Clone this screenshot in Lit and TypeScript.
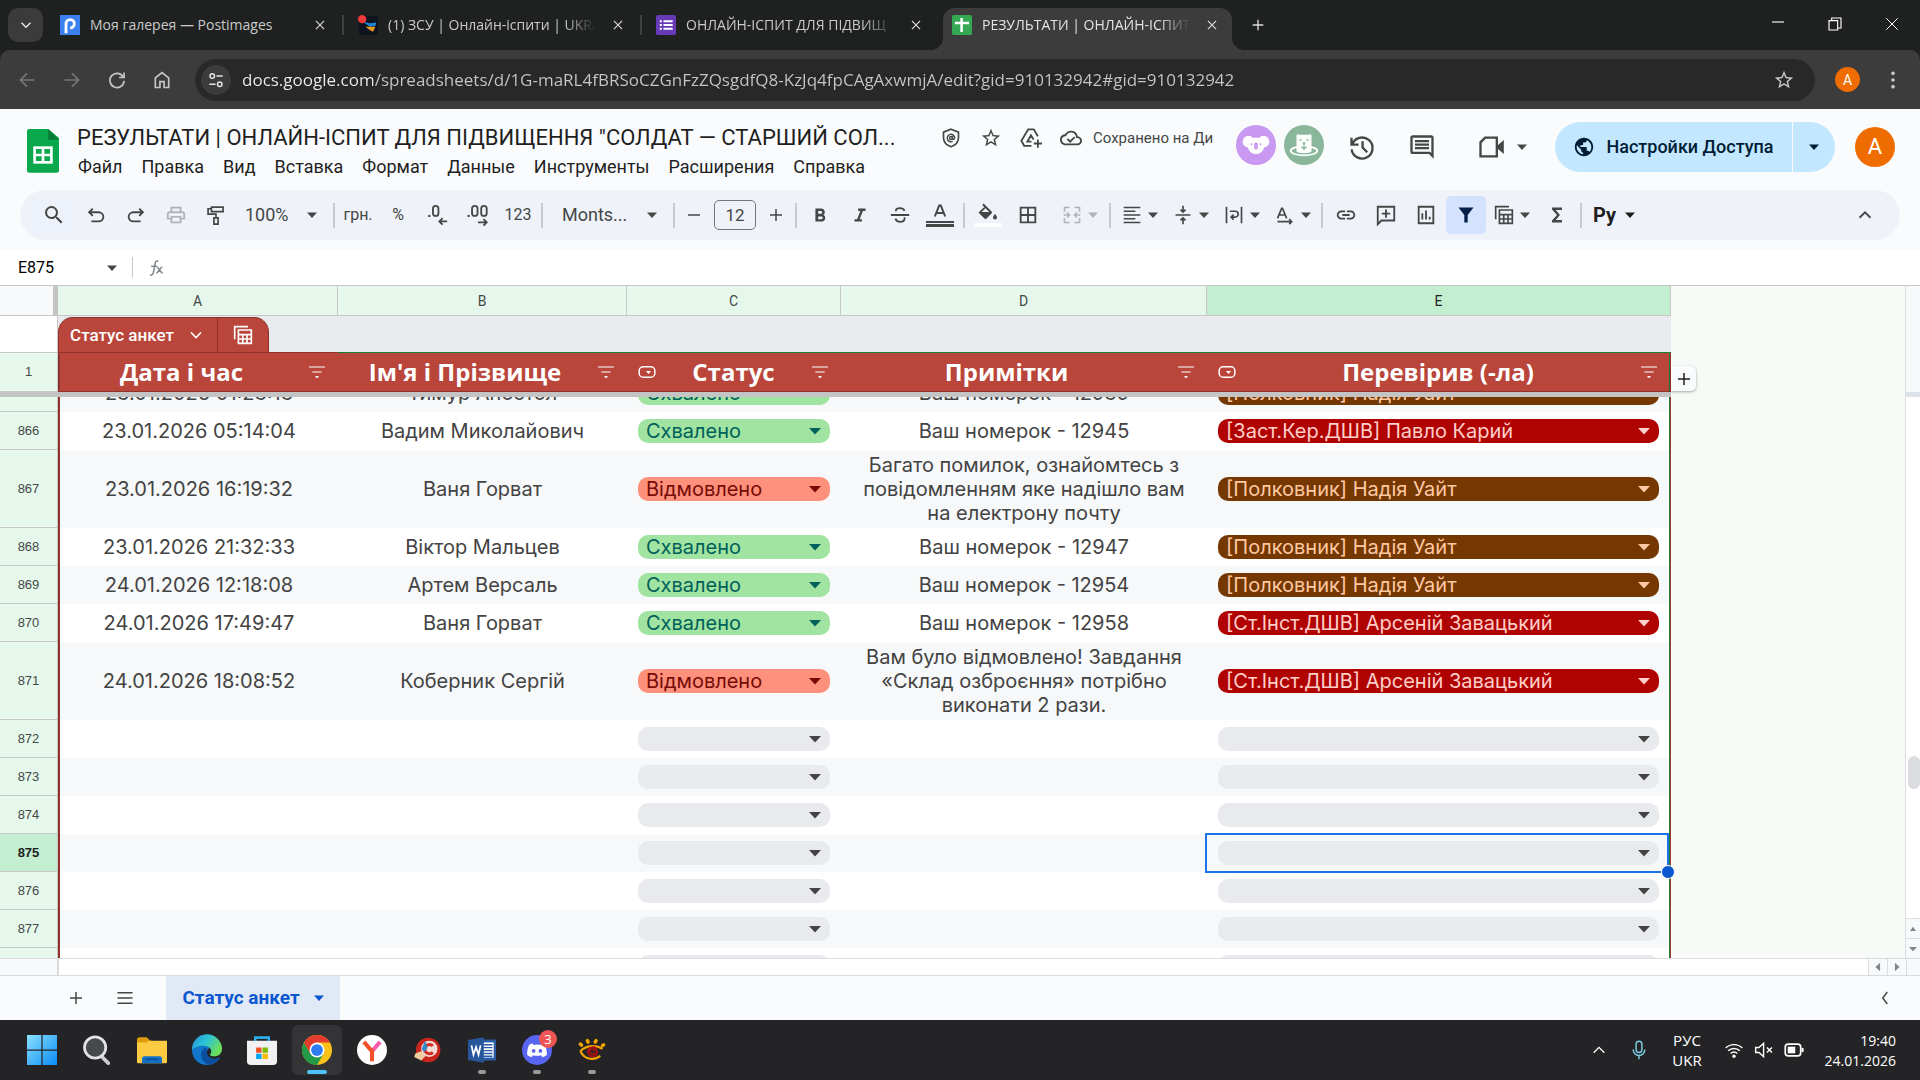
import { LitElement, html, css, svg, nothing, type TemplateResult } from "lit";
import { customElement } from "lit/decorators.js";
import { classMap } from "lit/directives/class-map.js";

/* ---------- icons (24-unit grid unless noted) ---------- */

const ICONS: Record<string, TemplateResult> = {
  chevronDown: svg`<path class="s" d="M6 9l6 6 6-6"/>`,
  chevronUp: svg`<path class="s" d="M6 15l6-6 6 6"/>`,
  chevronLeft: svg`<path class="s" d="M15 4l-6 8 6 8"/>`,
  caret: svg`<path d="M0 6h24L12 19z"/>`,
  caretUp: svg`<path d="M3 18h18L12 5z"/>`,
  caretLeft: svg`<path d="M17 2v20L6 12z"/>`,
  caretRight: svg`<path d="M7 2v20l11-10z"/>`,
  close: svg`<path class="s" d="M5 5l14 14M19 5L5 19"/>`,
  plus: svg`<path class="s" d="M12 4v16M4 12h16"/>`,
  minus: svg`<path class="s" d="M4 12h16"/>`,
  winMin: svg`<path class="t" d="M3 9h18"/>`,
  winMax: svg`<path class="t" d="M3 7h13v14H3zM7 7V3h14v15h-5"/>`,
  winClose: svg`<path class="t" d="M2 2l20 20M22 2L2 22"/>`,
  back: svg`<path class="s" d="M21 12H4M12 4l-8 8 8 8"/>`,
  forward: svg`<path class="s" d="M3 12h17M12 4l8 8-8 8"/>`,
  reload: svg`<path class="s" d="M19.5 8.5A8.5 8.5 0 1 0 20.500 13M20.500 3v6h-6"/>`,
  home: svg`<path class="s" d="M4 21V9.500L12 3l8 6.500V21h-5.500v-7h-5v7z"/>`,
  tune: svg`<path class="s" d="M12.500 6.500H21M3 17.500h8.500"/><circle class="s" cx="7" cy="6.500" r="3"/><circle class="s" cx="17" cy="17.500" r="3"/>`,
  star: svg`<path d="M22 9.240l-7.190-.62L12 2 9.190 8.630 2 9.240l5.460 4.730L5.820 21 12 17.270 18.180 21l-1.630-7.030L22 9.240zM12 15.400l-3.760 2.270 1-4.280-3.320-2.880 4.380-.38L12 6.100l1.710 4.040 4.380.38-3.320 2.880 1 4.280L12 15.400z"/>`,
  dots: svg`<circle cx="12" cy="4" r="2.200"/><circle cx="12" cy="12" r="2.200"/><circle cx="12" cy="20" r="2.200"/>`,
  shield: svg`<path class="s" d="M12 1.500l9 3.500v6.500c0 5.500-4 9.300-9 11-5-1.700-9-5.500-9-11V5z"/><circle class="t" cx="12" cy="12" r="1.800"/><path class="t" d="M13.800 10v2.400c0 1.700 2.700 1.700 2.700-.6A4.500 4.500 0 1 0 14 16.100"/>`,
  drive: svg`<path class="s" d="M12.500 20.500H4.500l-3-5.500L9 2.500h6l4.500 7.500M12.500 16H8L12 9l2.800 4.800M19.500 13.500v9M15 18h9"/>`,
  cloud: svg`<path d="M19.350 10.040A7.490 7.490 0 0 0 12 4C9.110 4 6.600 5.640 5.350 8.040A5.994 5.994 0 0 0 0 14c0 3.310 2.690 6 6 6h13c2.760 0 5-2.240 5-5 0-2.640-2.050-4.780-4.650-4.960zM19 18H6c-2.210 0-4-1.790-4-4s1.790-4 4-4h.71C7.370 7.690 9.480 6 12 6c3.040 0 5.500 2.460 5.500 5.500v.5H19c1.660 0 3 1.340 3 3s-1.340 3-3 3z"/><path class="s" d="M8 13l3 3 5-5"/>`,
  history: svg`<path class="s" d="M3.500 10a9 9 0 1 1-.4 4M3 4v6h6M12.500 7v5.500l4 4"/>`,
  comment: svg`<path d="M21.990 4c0-1.100-.89-2-1.990-2H4c-1.100 0-2 .9-2 2v12c0 1.100.9 2 2 2h14l4 4-.01-18zM20 4v13.170L18.830 16H4V4h16zM6 12h12v2H6zm0-3h12v2H6zm0-3h12v2H6z"/>`,
  meet: svg`<path class="s" d="M7 4h10v16H3V8zM3 8l4-4"/><path d="M16.500 11.500L23 6v12l-6.500-5.500z"/>`,
  globe: svg`<path d="M12 2C6.480 2 2 6.480 2 12s4.480 10 10 10 10-4.480 10-10S17.520 2 12 2zm-1 17.930c-3.950-.49-7-3.850-7-7.930 0-.62.08-1.210.21-1.790L9 15v1c0 1.100.9 2 2 2v1.930zm6.900-2.540c-.26-.81-1-1.390-1.900-1.390h-1v-3c0-.55-.45-1-1-1H8v-2h2c.55 0 1-.45 1-1V7h2c1.100 0 2-.9 2-2v-.41c2.930 1.190 5 4.060 5 7.410 0 2.080-.8 3.970-2.100 5.390z"/>`,
  search: svg`<path d="M15.500 14h-.79l-.28-.27A6.471 6.471 0 0 0 16 9.500 6.500 6.500 0 1 0 9.500 16c1.610 0 3.090-.59 4.230-1.570l.27.28v.79l5 4.990L20.490 19l-4.990-5zm-6 0C7.010 14 5 11.990 5 9.500S7.010 5 9.500 5 14 7.010 14 9.500 11.990 14 9.500 14z"/>`,
  undo: svg`<path class="s" d="M8.500 5L4.500 9l4 4M4.500 9H15a5 5 0 0 1 0 10H7"/>`,
  redo: svg`<path class="s" d="M15.500 5l4 4-4 4M19.500 9H9a5 5 0 0 0 0 10h8"/>`,
  print: svg`<path d="M19 8h-1V3H6v5H5c-1.660 0-3 1.340-3 3v6h4v4h12v-4h4v-6c0-1.660-1.340-3-3-3zM8 5h8v3H8V5zm8 12v2H8v-4h8v2zm2-2v-2H6v2H4v-4c0-.55.45-1 1-1h14c.55 0 1 .45 1 1v4h-2z"/>`,
  roller: svg`<path class="s" d="M6.500 2.500h14V8h-14zM6.500 4.500H2.500V11H12v4M9.500 15.500h5V23h-5z"/>`,
  decLess: svg`<path class="s" d="M22 19h-8M17 15.500L13.500 19l3.500 3.500"/><rect class="s" x="6.500" y="2" width="6" height="11" rx="3"/><circle cx="2.500" cy="13" r="1.300"/>`,
  decMore: svg`<path class="s" d="M12 20h9M18 16.500l3.500 3.500-3.500 3.500"/><rect class="s" x="5.500" y="2" width="6" height="11" rx="3"/><rect class="s" x="15.500" y="2" width="6" height="11" rx="3"/><circle cx="1.800" cy="13" r="1.300"/>`,
  bold: svg`<path d="M15.600 11.790c.97-.67 1.650-1.770 1.650-2.790 0-2.260-1.750-4-4-4H7v14h7.040c2.090 0 3.710-1.700 3.710-3.790 0-1.520-.86-2.820-2.150-3.420zM10 7.500h3c.83 0 1.500.67 1.500 1.500s-.67 1.500-1.500 1.500h-3v-3zm3.500 9H10v-3h3.500c.83 0 1.500.67 1.500 1.500s-.67 1.500-1.500 1.500z"/>`,
  italic: svg`<path d="M10 5v2.500h2.400l-3.600 9H6V19h8v-2.500h-2.400l3.600-9H18V5z"/>`,
  strike: svg`<path class="s" d="M2 12h20M17 7.500C16 5.500 14.300 4.500 12 4.500c-2.800 0-4.600 1.400-4.600 3.500M7 16c.7 2 2.500 3.500 5 3.500 3 0 5-1.500 5-3.600 0-.5-.1-1-.3-1.400"/>`,
  textColor: svg`<path class="s" d="M6.800 13.500L11.200 2.500h1.600l4.400 11M8.500 10h7"/><path d="M-2 18h28v2H-2zM-2 21h28v3H-2z"/>`,
  fill: svg`<path d="M15.560 8.440L7.620.5 6.210 1.910l2.080 2.080-4.850 4.450c-.59.59-.59 1.540 0 2.120l5 5c.29.29.68.44 1.060.44s.77-.15 1.060-.44l5-5c.59-.58.59-1.530 0-2.120zM5.500 9l4-3.800L13.300 9zM19 11s-2 2.170-2 3.500c0 1.100.9 2 2 2s2-.9 2-2c0-1.330-2-3.500-2-3.500z"/><path d="M-2 20h28v4H-2z" fill="#fff"/>`,
  borders: svg`<path d="M3 3v18h18V3H3zm8 16H5v-6h6v6zm0-8H5V5h6v6zm8 8h-6v-6h6v6zm0-8h-6V5h6v6z"/>`,
  merge: svg`<path class="s" d="M9 3H3v5M15 3h6v5M3 16v5h6M21 16v5h-6M2 12h7M6 9l3 3-3 3M22 12h-7M18 9l-3 3 3 3"/>`,
  alignLeft: svg`<path class="s" d="M2 3h20M2 7.500h14M2 12h20M2 16.500h14M2 21h20"/>`,
  vAlign: svg`<path class="s" d="M3 12h18M12 1v7M9 5.500l3 3 3-3M12 23v-7M9 18.500l3-3 3 3"/>`,
  wrap: svg`<path class="s" d="M3 2v20M21 2v20M7 7.500h6.500a3.500 3.500 0 0 1 0 7H9M11.500 11.500l-3 3 3 3"/>`,
  rotate: svg`<path class="s" d="M3 16L8 4h1l5 12M5 12h7M3 20h17M17 17l3 3-3 3"/>`,
  link: svg`<path d="M3.900 12c0-1.710 1.390-3.100 3.100-3.100h4V7H7c-2.760 0-5 2.240-5 5s2.240 5 5 5h4v-1.900H7c-1.710 0-3.100-1.390-3.100-3.100zM8 13h8v-2H8v2zm9-6h-4v1.900h4c1.710 0 3.100 1.390 3.100 3.100s-1.390 3.100-3.100 3.100h-4V17h4c2.760 0 5-2.240 5-5s-2.240-5-5-5z"/>`,
  addComment: svg`<path class="s" d="M3 3h18v15H7l-4 4zM12 6v9M7.500 10.500h9"/>`,
  chart: svg`<path class="s" d="M4 3h16v18H4zM8 17v-7M12 17V7M16 17v-3"/>`,
  funnel: svg`<path d="M3 3h18l-7 9v9h-4v-9z"/>`,
  tableView: svg`<path class="s" d="M2 17V2h16M6.500 6H22v16H6.500zM6.500 11.500H22M6.500 16.800H22M11.700 11.500V22M16.800 11.500V22"/>`,
  sigma: svg`<path d="M18 3H6v2.500l6 6.500-6 6.500V21h12v-3H10.500l5-6-5-6H18z"/>`,
  menu: svg`<path class="s" d="M2 5h20M2 12h20M2 19h20"/>`,
  filterLines: svg`<path class="t" d="M0 4.500h24M5 12h14"/><path d="M9.800 18h4.400v2.500H9.800z"/>`,
  chipMark: svg`<rect class="s" x="1.500" y="5" width="21" height="14" rx="5.500"/><path d="M10.500 10.500h7L14 14.500z"/>`,
  fx: svg`<path class="s" d="M4 21c3 1 4-1 4.500-3L11 5.500C11.500 3 13 2 15 3M5.500 9.500h8M13 11c3-1 4 8 8 7.500M20.500 10.500c-3 0-4.500 8-8 8"/>`,
  chevronTray: svg`<path class="s" d="M4 16l8-8 8 8"/>`,
  mic: svg`<rect class="t" x="8.500" y="1.500" width="7" height="13.500" rx="3.500"/><path class="t" d="M5 11.500a7 7 0 0 0 14 0M12 18.500V23"/>`,
  wifi: svg`<path class="t" d="M2 9.500a14.500 14.500 0 0 1 20 0M5 13a10.200 10.200 0 0 1 14 0M8 16.200a6 6 0 0 1 8 0"/><circle cx="12" cy="19.500" r="2"/>`,
  muted: svg`<path class="t" d="M2 9h4l5.500-5v16L6 15H2zM15.500 9l6 6M21.500 9l-6 6"/>`,
  battery: svg`<rect class="s" x="1.500" y="5" width="18.500" height="14" rx="3.500"/><rect x="4.500" y="8" width="9" height="8"/><path d="M21 9.500h2.500v5H21z"/>`,
};

const PICTURES: Record<string, TemplateResult> = {
  postimages: svg`<rect width="24" height="24" fill="#3c7fee"/><path d="M7.200 22V10.500a5 5 0 1 1 5 5" fill="none" stroke="#fff" stroke-width="3.400"/>`,
  game: svg`<rect x="1" y="1" width="23" height="23" rx="4" fill="#0d1420"/><path d="M6 8l8 2 8-1-1 4-7 1z" fill="#1d86d8"/><path d="M9 14l12 0-3 6-4-2z" fill="#e49a1c"/><circle cx="5" cy="5" r="5" fill="#f03a3a"/>`,
  forms: svg`<rect width="24" height="24" rx="2" fill="#673ab7"/><path d="M9 7.500h11M9 12h11M9 16.500h11" stroke="#fff" stroke-width="2.400"/><path d="M4.500 7.500H7M4.500 12H7M4.500 16.500H7" stroke="#fff" stroke-width="2.400"/>`,
  sheetsFav: svg`<rect width="24" height="24" rx="2" fill="#34a853"/><path d="M3.500 9.500h17M11.500 3.500v17" stroke="#fff" stroke-width="3"/>`,
  windows: svg`<defs><linearGradient id="w" gradientUnits="userSpaceOnUse" x2="24" y2="24"><stop stop-color="#8be0ff"/><stop offset="1" stop-color="#0a8df5"/></linearGradient></defs><path d="M0 0h11.500v11.500H0zM12.500 0H24v11.500H12.500zM0 12.500h11.500V24H0zM12.500 12.500H24V24H12.500z" fill="url(#w)"/>`,
  find: svg`<path d="M15.500 17l5.500 5.500" stroke="#c9ccd1" stroke-width="3" stroke-linecap="round"/><circle cx="10.500" cy="10" r="8.500" fill="#48494b" stroke="#dfe2e6" stroke-width="2.200"/>`,
  folder: svg`<path d="M0 4q0-2 2-2h6l2.500 2.500H12V10H0z" fill="#dd9a0c"/><path d="M0 6V4.500h24v17q0 1-1 1H1q-1 0-1-1z" fill="#fdcb42"/><path d="M0 4q0-2 2-2h6l1.500 2.500L8 6H0z" fill="#dd9a0c"/><path d="M4 22.500V19q0-2 2-2h12q2 0 2 2v3.500z" fill="#1370c4"/><path d="M7 19.500h10" stroke="#0a4a91" stroke-width="1.200"/>`,
  edge: svg`<defs><linearGradient id="e" x2="1" y2=".5"><stop stop-color="#2492dc"/><stop offset=".5" stop-color="#2bc3d6"/><stop offset="1" stop-color="#6be05a"/></linearGradient></defs><path d="M0 12C0 19 5.400 24 12 24c4.500 0 8.300-2.300 10.500-6-4.500 2.300-9.500 1-10.500-3-.6-2.500.5-4 2-4.500C12 6 1 6 0 12z" fill="#1276cc"/><path d="M0 12A12 12 0 0 1 24 11c0 4-3 6-6 6-3.500 0-4-1-3-2.500C16.500 12 14 8.500 9.500 8.500 5 8.500 1 10 0 12z" fill="url(#e)"/><path d="M11 10c-5 1-5.500 12 3 13.800 3.500-.6 6.500-2.700 8.500-5.800-4.500 2.300-9.500 1-10.500-3-.5-2 .3-3.500-1-5z" fill="#0b4f9e"/>`,
  store: svg`<path d="M6.500 7V2h11v5" fill="none" stroke="#28b0ef" stroke-width="1.800"/><path d="M0 4.500h24V21q0 3-3 3H3q-3 0-3-3z" fill="#f1f1f2"/><path d="M6.500 4.500V2h11v2.500" fill="none" stroke="#28b0ef" stroke-width="1.800"/><path d="M7.300 10h4.300v4.200H7.300z" fill="#f25022"/><path d="M12.400 10h4.300v4.200h-4.300z" fill="#7fba00"/><path d="M7.300 15h4.300v4.200H7.300z" fill="#00a4ef"/><path d="M12.400 15h4.300v4.200h-4.300z" fill="#ffb900"/>`,
  chrome: svg`<circle cx="12" cy="12" r="12" fill="#fbc116"/><path d="M1.600 6A12 12 0 0 0 12 24l5.200-9H6.800z" fill="#229a48"/><path d="M12 6h10.400A12 12 0 0 0 1.600 6l5.200 9z" fill="#e33b2e"/><circle cx="12" cy="12" r="6" fill="#fff"/><circle cx="12" cy="12" r="4.700" fill="#2f7cf0"/>`,
  yandex: svg`<circle cx="12" cy="12" r="12" fill="#fff"/><path d="M18.500 5.500L12 13" stroke="#f45cab" stroke-width="3.300"/><path d="M5.500 5.500l6.500 7.500v8" fill="none" stroke="#f0502a" stroke-width="3.300"/>`,
  cleaner: svg`<circle cx="13" cy="12" r="10.500" fill="#c9251d"/><circle cx="14" cy="11" r="7" fill="#f2dcd8"/><path d="M17 8.500a4 4 0 1 0 0 5.500" fill="none" stroke="#d22b22" stroke-width="2.600"/><path d="M10.500 4l2 6-3 4-2-3z" fill="#2d87c9"/><path d="M2 15l5-2 4 4-4 4-6-3z" fill="#f3cda2"/>`,
  word: svg`<path d="M12 3h11q1 0 1 1v16q0 1-1 1H12z" fill="#2b5ca5"/><path d="M13 5.500h9v13h-9z" fill="#fff"/><path d="M13 7.500h8M13 10h8M13 12.500h8M13 15h8M13 17.300h8" stroke="#2b5ca5" stroke-width="1.200"/><path d="M0 3.500L13.500 1v22L0 20.500z" fill="#28569a"/><path d="M3 8l1.700 8L6.900 9.500 9 16l1.800-8" fill="none" stroke="#fff" stroke-width="1.500"/>`,
  discord: svg`<circle cx="12" cy="12" r="12" fill="#5865f2"/><path d="M8.500 6.800c-1.300.2-2 .6-2.800 1C4.500 10.500 4 13 4.100 16c1.400 1 2.600 1.500 3.600 1.700l1-1.500c2.200.6 4.400.6 6.600 0l1 1.500c1-.2 2.200-.7 3.600-1.700.1-3-.4-5.500-1.600-8.200-.8-.4-1.500-.8-2.800-1l-.7 1.200a12 12 0 0 0-5.600 0z" fill="#fff"/><circle cx="9.300" cy="12.700" r="1.500" fill="#5865f2"/><circle cx="14.700" cy="12.700" r="1.500" fill="#5865f2"/>`,
  eye: svg`<path d="M2 13c5-5.500 14-5.500 19-2M2 13c4 8 13 8 17 4" fill="none" stroke="#f6a500" stroke-width="1.900"/><path d="M16.500 13.500a4 4 0 1 1-4-4 3 3 0 1 1-2.500 3.500 2 2 0 0 1 4 0" fill="none" stroke="#a51212" stroke-width="1.600"/><path d="M2 7l1 .8M8 4l.7 1.200M15.500 4l-.7 1.200M22 7.500l-1 .8" stroke="#f6a500" stroke-width="3" stroke-linecap="round"/>`,
  koala: svg`<circle cx="12" cy="12" r="12" fill="#c998f0"/><circle cx="7.500" cy="10" r="3.500" fill="#fff"/><circle cx="16.500" cy="10" r="3.500" fill="#fff"/><ellipse cx="12" cy="12.500" rx="5" ry="5" fill="#fff"/><rect x="10.900" y="10.500" width="2.200" height="4.200" rx="1.100" fill="#c998f0"/><circle cx="9.300" cy="11.500" r=".6" fill="#c998f0"/><circle cx="14.700" cy="11.500" r=".6" fill="#c998f0"/>`,
  bear: svg`<circle cx="12" cy="12" r="12" fill="#8ab79b"/><ellipse cx="12" cy="15.500" rx="8" ry="2.700" fill="none" stroke="#fff" stroke-width="1"/><path d="M7.500 16V6.500q0-1.500 1.800-.7h5.400q1.800-.8 1.800.7V16q-4.500 2-9 0z" fill="#fff"/><path d="M9.300 9h1.200M13.500 9h1.200" stroke="#8ab79b" stroke-width=".8"/><path d="M10.800 10.300h2.400L12 11.800z" fill="#8ab79b"/><path d="M12 11v3.500M10.500 13l1.500 1.500 1.500-1.500" stroke="#8ab79b" stroke-width=".8" fill="none"/>`,
  sheetsLogo: svg`<path d="M2 0h14l8 8v29q0 2-2 2H2q-2 0-2-2V2q0-2 2-2z" transform="scale(1 .84)" fill="#0aa84c"/><path d="M16 0l8 8h-8z" fill="#077a37"/><path d="M4.700 13h14.600v13H4.700z" fill="#fff"/><path d="M6.700 15h4.300v3.500H6.700zM13 15h4.300v3.500H13zM6.700 20.500h4.300V24H6.700zM13 20.500h4.300V24H13z" fill="#0aa84c"/>`,
};

const icon = (name: string, cls = "i22") =>
  html`<svg class="icon ${cls}" viewBox="0 0 24 24" aria-hidden="true">${ICONS[name]}</svg>`;

const picture = (name: string, cls = "i20", box = "0 0 24 24") =>
  html`<svg class="picture ${cls}" viewBox=${box} aria-hidden="true">${PICTURES[name]}</svg>`;

/* ---------- data ---------- */

interface Row {
  n: number;
  date?: string;
  name?: string;
  status?: "ok" | "no";
  note?: string;
  checker?: "brown" | "red" | "red2";
}

const ok = (n: number, date: string, name: string, num: number, checker: Row["checker"]): Row => ({
  n, date, name, status: "ok", note: `Ваш номерок - ${num}`, checker,
});

const ROWS: Row[] = [
  ok(865, "23.01.2026 01:23:13", "Тимур Апостол", 12939, "brown"),
  ok(866, "23.01.2026 05:14:04", "Вадим Миколайович", 12945, "red2"),
  { n: 867, date: "23.01.2026 16:19:32", name: "Ваня Горват", status: "no", note: "Багато помилок, ознайомтесь з\nповідомленням яке надішло вам\nна електрону почту", checker: "brown" },
  ok(868, "23.01.2026 21:32:33", "Віктор Мальцев", 12947, "brown"),
  ok(869, "24.01.2026 12:18:08", "Артем Версаль", 12954, "brown"),
  ok(870, "24.01.2026 17:49:47", "Ваня Горват", 12958, "red"),
  { n: 871, date: "24.01.2026 18:08:52", name: "Коберник Сергій", status: "no", note: "Вам було відмовлено! Завдання\n«Склад озброєння» потрібно\nвиконати 2 рази.", checker: "red" },
  { n: 872 }, { n: 873 }, { n: 874 }, { n: 875 }, { n: 876 }, { n: 877 }, { n: 878 },
];

const STATUS = { ok: "Схвалено", no: "Відмовлено" };
const CHECKER = {
  brown: "[Полковник] Надія Уайт",
  red: "[Ст.Інст.ДШВ] Арсеній Завацький",
  red2: "[Заст.Кер.ДШВ] Павло Карий",
};

const COLUMNS = [
  { letter: "A", title: "Дата і час" },
  { letter: "B", title: "Ім'я і Прізвище" },
  { letter: "C", title: "Статус", chip: true },
  { letter: "D", title: "Примітки" },
  { letter: "E", title: "Перевірив (-ла)", chip: true },
];

const MENUS = ["Файл", "Правка", "Вид", "Вставка", "Формат", "Данные", "Инструменты", "Расширения", "Справка"];

const SELECTED_ROW = 875;

@customElement("app-root")
export class AppRoot extends LitElement {
  static styles = css`
    :host {
      display: flex;
      flex-direction: column;
      height: 100vh;
      overflow: hidden;
      background: #f9fbfd;
      color: #444746;
      font: 16px/20px Roboto, "Liberation Sans", sans-serif;
    }
    * { box-sizing: border-box; }
    button, input, select {
      font: inherit;
      color: inherit;
      background: none;
      border: 0;
      padding: 0;
      margin: 0;
      outline: 0;
      appearance: none;
    }
    button { display: flex; align-items: center; justify-content: center; }
    a { color: inherit; text-decoration: none; }
    svg { display: block; flex: none; overflow: visible; }
    .icon { fill: currentColor; }
    .icon .s { fill: none; stroke: currentColor; stroke-width: 2; }
    .icon .t { fill: none; stroke: currentColor; stroke-width: 1.7; }
    .i8 { width: 8px; height: 8px; }
    .i10 { width: 10px; height: 10px; }
    .i12 { width: 12px; height: 12px; }
    .i14 { width: 14px; height: 14px; }
    .i16 { width: 16px; height: 16px; }
    .i18 { width: 18px; height: 18px; }
    .i20 { width: 20px; height: 20px; }
    .i22 { width: 22px; height: 22px; }
    .i24 { width: 24px; height: 24px; }
    .i28 { width: 28px; height: 28px; }
    .i30 { width: 30px; height: 30px; }
    .i40 { width: 40px; height: 40px; }

    /* browser frame */
    .tabs {
      display: flex;
      height: 50px;
      flex: none;
      background: #1f2120;
      color: #c9cac9;
      font: 14px/20px "Open Sans", sans-serif;
    }
    .tab-search {
      width: 35px;
      height: 34px;
      margin: 8px 3px 0 8px;
      border-radius: 10px;
      background: #3b3b3b;
      color: #e3e3e3;
    }
    .tab {
      display: flex;
      align-items: center;
      flex: 0 1 298px;
      min-width: 0;
      padding: 0 12px 0 14px;
      gap: 10px;
      position: relative;
    }
    .tab.ruled { border-right: 2px solid #3f4140; padding-right: 10px; }
    .tab-slot { display: flex; flex: 0 1 298px; min-width: 0; padding: 15px 0; }
    .tab-slot .tab { flex: 1; }
    .tab-title { flex: 1; min-width: 0; white-space: nowrap; }
    .fade .tab-title { mask-image: linear-gradient(90deg, #000 85%, transparent); }
    .tab-close { flex: none; width: 24px; height: 20px; color: #dcdcdc; }
    .tab.active {
      flex-basis: 289px;
      margin: 8px 0 0 3px;
      padding: 0 8px 8px 9px;
      border-radius: 12px 12px 0 0;
      background: #3c3c3c;
      color: #e3e3e3;
    }
    .tab.active::before, .tab.active::after {
      content: "";
      position: absolute;
      bottom: 0;
      width: 12px;
      height: 12px;
    }
    .tab.active::before { left: -12px; background: radial-gradient(circle at 0 0, transparent 12px, #3c3c3c 12px); }
    .tab.active::after { right: -12px; background: radial-gradient(circle at 100% 0, transparent 12px, #3c3c3c 12px); }
    .new-tab { width: 34px; height: 34px; margin: 8px 0 0 9px; color: #dcdcdc; }
    .window-buttons { display: flex; margin-left: auto; color: #fff; }
    .window-buttons button { width: 57px; height: 48px; }
    .address {
      display: flex;
      align-items: center;
      flex: none;
      height: 59px;
      padding: 0 4px;
      background: #3c3c3c;
      border-radius: 10px 10px 0 0;
      color: #c7c7c7;
    }
    .frame { flex: none; background: #1f2120; }
    .nav { width: 45px; height: 40px; }
    .nav.dim { color: #777; }
    .omnibox {
      display: flex;
      align-items: center;
      flex: 1;
      height: 42px;
      margin: 0 20px 0 11px;
      padding: 0 20px 0 6px;
      gap: 11px;
      border-radius: 21px;
      background: #282828;
    }
    .site { width: 30px; height: 30px; border-radius: 50%; background: #3c3c3c; color: #e3e3e3; }
    .url {
      flex: 1;
      height: 30px;
      font: 17px/24px "Open Sans", sans-serif;
      color: #c7c7c7;
      background: linear-gradient(90deg, #f0f0f0 131px, #c7c7c7 131px);
      background-clip: text;
      -webkit-text-fill-color: transparent;
    }
    .profile {
      width: 25px;
      height: 25px;
      border-radius: 50%;
      background: #ef6c00;
      color: #fff;
      font-size: 14px;
    }
    .kebab { width: 46px; height: 40px; margin-left: 10px; }

    /* document header */
    .header { display: flex; flex: none; height: 81px; padding: 13px 25px 0 27px; }
    .logo { width: 32px; height: 44px; margin: 7px 18px 0 0; }
    .logo svg { width: 32px; height: 44px; }
    .doc { flex: 1; min-width: 0; }
    .title-row { display: flex; align-items: center; height: 32px; }
    .title {
      width: 836px;
      height: 30px;
      margin-right: 18px;
      color: #1f1f1f;
      font-size: 22px;
      line-height: 30px;
    }
    .title-row button { width: 40px; height: 32px; flex: none; }
    .saved { flex: 1; padding-left: 2px; white-space: nowrap; font-size: 15px; }
    .menus { display: flex; gap: 19px; padding: 0 1px; }
    .menus button { height: 26px; color: #1f1f1f; font-size: 18px; }
    .actions { display: flex; align-items: center; height: 50px; }
    .people { display: flex; gap: 8px; margin: 0 8px 4px 0; }
    .actions .square { width: 60px; height: 50px; }
    .actions .meet { width: 103px; height: 50px; gap: 12px; padding-right: 4px; }
    .share { display: flex; gap: 1px; width: 280px; height: 50px; margin-right: 20px; color: #001d35; font-weight: 500; font-size: 18px; }
    .share button { background: #c2e7ff; }
    .share .main { flex: 1; gap: 11px; border-radius: 25px 0 0 25px; }
    .share .more { width: 42px; border-radius: 0 25px 25px 0; }
    .me { width: 40px; height: 40px; border-radius: 50%; background: #ef6c00; color: #fff; font-size: 22px; }

    /* toolbar */
    .toolbar {
      display: flex;
      align-items: center;
      flex: none;
      height: 50px;
      margin: 0 20px 10px;
      padding: 0 12px;
      border-radius: 25px;
      background: #eff3f9;
    }
    .tool { width: 40px; height: 38px; flex: none; }
    .tool.find { width: 44px; background: #edf2fa; }
    .tool.off { color: #b1b5ba; }
    .tool.on { border-radius: 5px; background: #d3e3fd; color: #041e49; }
    .tool.text { font-size: 16px; }
    .tool.narrow { width: 32px; }
    .split { display: flex; justify-content: flex-start; gap: 6px; width: 51px; height: 38px; padding-left: 8px; flex: none; }
    .split.wide { width: 58px; padding-left: 14px; color: #b1b5ba; }
    .split.py { width: 58px; padding-left: 8px; gap: 9px; color: #1f1f1f; font-weight: 700; font-size: 20px; }
    .sep { width: 2px; height: 25px; margin: 0 3px; background: #c7c9cc; }
    .pick { display: grid; align-items: center; flex: none; width: 94px; font-size: 18px; }
    .pick.font { width: 124px; }
    .pick > * { grid-area: 1 / 1; }
    .pick select { height: 38px; padding-left: 9px; width: 100%; }
    .pick.font select { padding-left: 16px; }
    .pick svg { justify-self: end; margin-right: 13px; pointer-events: none; }
    .size {
      width: 42px;
      height: 30px;
      margin: 0 4px;
      border: 1px solid #747775;
      border-radius: 5px;
      text-align: center;
      font-size: 17px;
    }
    .collapse { margin-left: auto; width: 46px; height: 38px; }

    /* formula bar */
    .formula { display: flex; align-items: center; flex: none; height: 35px; background: #fff; }
    .name-box { width: 103px; height: 28px; padding-left: 18px; color: #000; font: 16px/20px Roboto, sans-serif; }
    .formula .name-list { width: 18px; height: 28px; }
    .formula .rule { width: 1px; height: 21px; margin: 0 14px 0 11px; background: #c7c7c7; }
    .formula .fx { color: #80868b; }
    .formula .entry { flex: 1; height: 28px; padding-left: 8px; color: #000; }

    /* grid */
    .board { display: flex; flex: 1; min-height: 0; border-top: 1px solid #c7c7c7; background: #f8faf7; }
    .sheet { display: flex; flex-direction: column; flex: 1; min-width: 0; position: relative; overflow: hidden; }
    table { table-layout: fixed; width: 1671px; border-spacing: 0; flex: none; }
    .w-n { width: 58px; } .w-a { width: 280px; } .w-b { width: 289px; }
    .w-c { width: 214px; } .w-d { width: 366px; } .w-e { width: 464px; }
    th, td { padding: 0; }
    .letters th {
      height: 30px;
      border-right: 1px solid #c7c7c7;
      border-bottom: 1px solid #c7c7c7;
      background: #e6f8ec;
      font: 14px/20px Roboto, sans-serif;
    }
    .letters .corner { border-right: 5px solid #c4c4c4; background: #f8f9fa; }
    .letters .current { background: #c3eed0; color: #1f1f1f; }
    .name-row td { height: 37px; background: #e8eaed; vertical-align: bottom; border-bottom: 1px solid #188038; }
    .name-row .row-no { background: #fff; border-right: 1px solid #c7c7c7; border-bottom: 1px solid #c7c7c7; }
    .table-tag {
      display: flex;
      width: 211px;
      height: 35px;
      border: 1px solid #8f342d;
      border-bottom: 0;
      border-radius: 15px 15px 0 0;
      background: #b9453b;
      color: #fff;
      font: 500 17px/20px Roboto, sans-serif;
    }
    .name-row .tagged { border-bottom-color: #8f342d; }
    .table-tag .label { width: 159px; gap: 12px; border-right: 1px solid #8f342d; font-weight: 500; }
    .table-tag .view { flex: 1; }
    .row-no {
      border-right: 1px solid #c7c7c7;
      border-bottom: 1px solid #c7c7c7;
      background: #e6f8ec;
      font: 13px/16px "Liberation Sans", sans-serif;
      text-align: center;
    }
    .row-no.current { background: #c3eed0; color: #1f1f1f; font-weight: 700; }
    .heads th.head { height: 39px; background: #b9453b; color: #fff; border-bottom: 1px solid #8f342d; font: 700 24px/32px "Open Sans", sans-serif; }
    .head-in { display: flex; align-items: center; padding: 0 12px 0 0; gap: 5px; }
    .head-in.chips { padding-left: 11px; }
    .head-in .caption { flex: 1; }
    .head-in .filter { width: 18px; height: 24px; }
    .freeze { flex: none; width: 1671px; height: 5px; background: #c4c4c4; }
    .scroller { flex: 1; min-height: 0; overflow: hidden; }
    .scroller table { margin-top: -23px; }
    .scroller tr { height: 38px; background: #fff; }
    .scroller tr.band { background: #f6f8f9; }
    .cell {
      padding: 3px 8px;
      text-align: center;
      color: #434343;
      font: 20px/24px Inter, sans-serif;
    }
    .cell.note { white-space: pre-line; }
    .cell.first, .heads th.first { border-left: 2px solid #8f342d; }
    .cell.last, .heads th.last { border-right: 1px solid #a23a31; box-shadow: inset -1px 0 #188038; }
    .cell.boxed { padding: 0 11px; position: relative; }
    .cell.picked::before {
      content: "";
      position: absolute;
      inset: -1px 1px -1px -2px;
      border: 2px solid #1a73e8;
      pointer-events: none;
    }
    .cell.picked::after {
      content: "";
      position: absolute;
      z-index: 1;
      right: -5px;
      bottom: -7px;
      width: 12px;
      height: 12px;
      border: 1px solid #fff;
      border-radius: 50%;
      background: #0b57d0;
    }
    .chip { display: grid; align-items: center; height: 24px; border-radius: 10px; background: #e8eaed; }
    .chip > * { grid-area: 1 / 1; }
    .chip select { width: 100%; height: 24px; padding-left: 8px; border-radius: 10px; line-height: 24px; }
    .chip svg { justify-self: end; margin-right: 9px; pointer-events: none; }
    .chip.ok { background: #a1e3a1; color: #00605a; }
    .chip.no { background: #ff907c; color: #750b06; }
    .chip.brown { background: #753800; color: #ffc8a4; }
    .chip.red, .chip.red2 { background: #b10202; color: #ffcfc9; }
    .add-column {
      position: absolute;
      left: 1671px;
      top: 80px;
      width: 25px;
      height: 25px;
      border-radius: 0 5px 5px 0;
      background: #f9fbfd;
      box-shadow: 0 1px 3px #0005;
      color: #1f1f1f;
    }
    .vbar { display: flex; flex-direction: column; width: 15px; border-left: 1px solid #dadce0; background: #fff; color: #80868b; }
    .vbar .top { height: 106px; background: #f8f9fa; }
    .vbar .stop { height: 5px; background: #dde3ea; }
    .vbar .track { flex: 1; display: flex; flex-direction: column; padding-left: 2px; }
    .vbar .before { flex: 360; }
    .vbar .thumb { flex: 33; border-radius: 6px; background: #dadce0; }
    .vbar .after { flex: 129; }
    .vbar button { height: 20px; border-top: 1px solid #dadce0; background: #f8f9fa; }
    .hbar { display: flex; flex: none; height: 17px; border-top: 1px solid #dadce0; background: #fff; color: #80868b; }
    .hbar .stub { width: 59px; border-right: 2px solid #dadce0; background: #f8f9fa; }
    .hbar .track { flex: 1; }
    .hbar button { width: 19px; border-left: 1px solid #dadce0; background: #f8f9fa; }
    .hbar .end { width: 14px; border-left: 1px solid #dadce0; background: #f8f9fa; }

    /* sheet tabs */
    .sheet-tabs {
      display: flex;
      align-items: center;
      flex: none;
      height: 45px;
      padding: 0 20px 0 67px;
      border-top: 1px solid #dadce0;
    }
    .sheet-tabs .round { width: 49px; height: 40px; justify-content: flex-start; }
    .sheet-tab { width: 174px; height: 44px; margin-left: 1px; gap: 14px; background: #e1e9f7; color: #0b57d0; font-weight: 700; font-size: 19px; }
    .sheet-tabs .side { margin-left: auto; width: 30px; height: 40px; }

    /* desktop taskbar */
    .taskbar {
      display: flex;
      align-items: center;
      flex: none;
      height: 60px;
      padding: 0 24px 0 14px;
      background: #242426;
      color: #fff;
      font: 15px/20px "Open Sans", sans-serif;
    }
    .app { position: relative; width: 55px; height: 60px; }
    .app .pad { display: flex; align-items: center; justify-content: center; width: 50px; height: 50px; border-radius: 6px; }
    .app.front .pad { background: #343436; }
    .app.open::after, .app.front::after {
      content: "";
      position: absolute;
      bottom: 6px;
      width: 8px;
      height: 4px;
      border-radius: 2px;
      background: #9a9a9a;
    }
    .app.front::after { width: 20px; background: #4cc2ff; }
    .badge {
      position: absolute;
      top: 10px;
      right: 7px;
      width: 18px;
      height: 18px;
      border-radius: 50%;
      background: #ee5555;
      color: #fff;
      font: 13px/18px "Open Sans", sans-serif;
      text-align: center;
    }
    .tray { display: flex; align-items: center; margin-left: auto; }
    .tray .one { width: 40px; height: 50px; }
    .tray .mic { color: #7cd3e8; }
    .tray .lang { width: 56px; height: 50px; }
    .tray .status { width: 98px; gap: 10px; height: 50px; }
    .tray .clock { display: block; width: 83px; height: 50px; padding-top: 1px; text-align: right; font-size: 14px; }
  `;

  private tab(title: string, fav: string, cls: string) {
    return html`<div class="tab ${cls}" role="tab">
      ${picture(fav)}
      <span class="tab-title">${title}</span>
      <button class="tab-close" aria-label="Закрыть">${icon("close", "i14")}</button>
    </div>`;
  }

  private tool(name: string, label: string, cls = "", size = "i22") {
    return html`<button class="tool ${cls}" aria-label=${label}>${icon(name, size)}</button>`;
  }

  private split(name: string, label: string, cls = "") {
    return html`<button class="split ${cls}" aria-label=${label}>${icon(name, "i20")}${icon("caret", "i10")}</button>`;
  }

  private chip(kind: string | undefined, text: string, label: string) {
    return html`<div class="chip ${kind ?? ""}">
      <select aria-label=${label}><option>${text}</option></select>
      ${icon("caret", "i12")}
    </div>`;
  }

  private row(r: Row) {
    const current = r.n === SELECTED_ROW;
    return html`<tr class=${classMap({ band: r.n % 2 === 1 })}>
      <th class=${classMap({ "row-no": true, current })} scope="row">${r.n}</th>
      <td class="cell first">${r.date ?? nothing}</td>
      <td class="cell">${r.name ?? nothing}</td>
      <td class="cell boxed">${this.chip(r.status, r.status ? STATUS[r.status] : "", `Статус, ${r.n}`)}</td>
      <td class="cell note">${r.note ?? nothing}</td>
      <td class=${classMap({ cell: true, boxed: true, last: true, picked: current })}>
        ${this.chip(r.checker, r.checker ? CHECKER[r.checker] : "", `Перевірив, ${r.n}`)}
      </td>
    </tr>`;
  }

  private cols() {
    return html`<colgroup>
      <col class="w-n" /><col class="w-a" /><col class="w-b" /><col class="w-c" /><col class="w-d" /><col class="w-e" />
    </colgroup>`;
  }

  private app(name: string, label: string, state = "", size = "i30", badge = "") {
    return html`<button class="app ${state}" aria-label=${label}>
      <span class="pad">${picture(name, size)}</span>
      ${badge ? html`<span class="badge">${badge}</span>` : nothing}
    </button>`;
  }

  render() {
    const sep = html`<span class="sep"></span>`;
    return html`
      <div class="tabs" role="tablist">
        <button class="tab-search" aria-label="Поиск вкладок">${icon("chevronDown", "i18")}</button>
        <div class="tab-slot">${this.tab("Моя галерея — Postimages", "postimages", "ruled")}</div>
        <div class="tab-slot">${this.tab("(1) ЗСУ | Онлайн-іспити | UKRA", "game", "ruled fade")}</div>
        <div class="tab-slot">${this.tab("ОНЛАЙН-ІСПИТ ДЛЯ ПІДВИЩ", "forms", "fade")}</div>
        ${this.tab("РЕЗУЛЬТАТИ | ОНЛАЙН-ІСПИТ", "sheetsFav", "active fade")}
        <button class="new-tab" aria-label="Новая вкладка">${icon("plus", "i16")}</button>
        <div class="window-buttons">
          <button aria-label="Свернуть">${icon("winMin", "i16")}</button>
          <button aria-label="Окно">${icon("winMax", "i16")}</button>
          <button aria-label="Закрыть окно">${icon("winClose", "i14")}</button>
        </div>
      </div>
      <div class="frame"><div class="address">
        <button class="nav dim" aria-label="Назад">${icon("back", "i20")}</button>
        <button class="nav dim" aria-label="Вперёд">${icon("forward", "i20")}</button>
        <button class="nav" aria-label="Обновить">${icon("reload", "i20")}</button>
        <button class="nav" aria-label="Главная">${icon("home", "i20")}</button>
        <div class="omnibox">
          <button class="site" aria-label="О сайте">${icon("tune", "i18")}</button>
          <input class="url" aria-label="Адрес" value="docs.google.com/spreadsheets/d/1G-maRL4fBRSoCZGnFzZQsgdfQ8-KzJq4fpCAgAxwmjA/edit?gid=910132942#gid=910132942" />
          <button aria-label="В закладки">${icon("star", "i22")}</button>
        </div>
        <button class="profile" aria-label="Профиль">A</button>
        <button class="kebab" aria-label="Меню браузера">${icon("dots", "i20")}</button>
      </div></div>

      <header class="header">
        <a class="logo" href="#" aria-label="Таблицы">${picture("sheetsLogo", "", "0 0 24 33")}</a>
        <div class="doc">
          <div class="title-row">
            <input class="title" aria-label="Название" value='РЕЗУЛЬТАТИ | ОНЛАЙН-ІСПИТ ДЛЯ ПІДВИЩЕННЯ "СОЛДАТ — СТАРШИЙ СОЛ...' />
            <button aria-label="Доступ">${icon("shield", "i20")}</button>
            <button aria-label="Отметить">${icon("star", "i22")}</button>
            <button aria-label="Переместить">${icon("drive", "i22")}</button>
            <button aria-label="Статус документа">${icon("cloud", "i22")}</button>
            <span class="saved">Сохранено на Ди</span>
          </div>
          <nav class="menus">${MENUS.map((m) => html`<button>${m}</button>`)}</nav>
        </div>
        <div class="actions">
          <div class="people">${picture("koala", "i40")}${picture("bear", "i40")}</div>
          <button class="square" aria-label="История">${icon("history", "i28")}</button>
          <button class="square" aria-label="Комментарии">${icon("comment", "i28")}</button>
          <button class="meet" aria-label="Видеовстреча">${icon("meet", "i28")}${icon("caret", "i10")}</button>
          <div class="share">
            <button class="main">${icon("globe", "i22")}Настройки Доступа</button>
            <button class="more" aria-label="Ещё">${icon("caret", "i10")}</button>
          </div>
          <button class="me" aria-label="Аккаунт">A</button>
        </div>
      </header>

      <div class="toolbar" role="toolbar">
        ${this.tool("search", "Поиск", "find", "i24")}
        ${this.tool("undo", "Отменить", "", "i22")}
        ${this.tool("redo", "Повторить", "", "i22")}
        ${this.tool("print", "Печать", "off")}
        ${this.tool("roller", "Копировать формат", "", "i20")}
        <div class="pick"><select aria-label="Масштаб"><option>100%</option></select>${icon("caret", "i10")}</div>
        ${sep}
        <button class="tool text">грн.</button>
        <button class="tool text">%</button>
        ${this.tool("decLess", "Меньше знаков")}
        ${this.tool("decMore", "Больше знаков")}
        <button class="tool text">123</button>
        ${sep}
        <div class="pick font"><select aria-label="Шрифт"><option>Monts...</option></select>${icon("caret", "i10")}</div>
        ${sep}
        ${this.tool("minus", "Уменьшить", "narrow", "i18")}
        <input class="size" aria-label="Размер шрифта" value="12" />
        ${this.tool("plus", "Увеличить", "narrow", "i18")}
        ${sep}
        ${this.tool("bold", "Полужирный")}
        ${this.tool("italic", "Курсив")}
        ${this.tool("strike", "Зачеркнутый")}
        ${this.tool("textColor", "Цвет текста", "", "i24")}
        ${sep}
        ${this.tool("fill", "Заливка", "", "i24")}
        ${this.tool("borders", "Границы")}
        ${this.split("merge", "Объединить", "wide")}
        ${sep}
        ${this.split("alignLeft", "По горизонтали")}
        ${this.split("vAlign", "По вертикали")}
        ${this.split("wrap", "Перенос")}
        ${this.split("rotate", "Поворот")}
        ${sep}
        ${this.tool("link", "Ссылка")}
        ${this.tool("addComment", "Комментарий")}
        ${this.tool("chart", "Диаграмма")}
        ${this.tool("funnel", "Фильтр", "on", "i20")}
        ${this.split("tableView", "Представления")}
        ${this.tool("sigma", "Функции", "", "i20")}
        ${sep}
        <button class="split py">Py${icon("caret", "i10")}</button>
        <button class="collapse" aria-label="Свернуть меню">${icon("chevronUp", "i22")}</button>
      </div>

      <div class="formula">
        <input class="name-box" aria-label="Ячейка" value="E875" />
        <button class="name-list" aria-label="Диапазоны">${icon("caret", "i10")}</button>
        <span class="rule"></span>
        ${icon("fx", "i18 fx")}
        <input class="entry" aria-label="Формула" value="" />
      </div>

      <div class="board">
        <div class="sheet">
          <table>
            ${this.cols()}
            <thead>
              <tr class="letters">
                <th class="corner"></th>
                ${COLUMNS.map((c) => html`<th class=${c.letter === "E" ? "current" : ""}>${c.letter}</th>`)}
              </tr>
              <tr class="name-row">
                <td class="row-no"></td>
                <td class="tagged">
                  <div class="table-tag">
                    <button class="label">Статус анкет${icon("chevronDown", "i20")}</button>
                    <button class="view" aria-label="Вид таблицы">${icon("tableView", "i20")}</button>
                  </div>
                </td>
                <td></td><td></td><td></td><td></td>
              </tr>
              <tr class="heads">
                <th class="row-no" scope="row">1</th>
                ${COLUMNS.map((c, i) => html`<th class=${classMap({ head: true, first: i === 0, last: i === 4 })}>
                  <div class=${classMap({ "head-in": true, chips: !!c.chip })}>
                    ${c.chip ? icon("chipMark", "i18") : nothing}
                    <span class="caption">${c.title}</span>
                    <button class="filter" aria-label="Фильтр: ${c.title}">${icon("filterLines", "i16")}</button>
                  </div>
                </th>`)}
              </tr>
            </thead>
          </table>
          <div class="freeze"></div>
          <div class="scroller">
            <table>
              ${this.cols()}
              <tbody>${ROWS.map((r) => this.row(r))}</tbody>
            </table>
          </div>
          <button class="add-column" aria-label="Добавить столбец">${icon("plus", "i18")}</button>
        </div>
        <div class="vbar">
          <div class="top"></div><div class="stop"></div>
          <div class="track"><div class="before"></div><div class="thumb"></div><div class="after"></div></div>
          <button aria-label="Вверх">${icon("caretUp", "i8")}</button>
          <button aria-label="Вниз">${icon("caret", "i8")}</button>
        </div>
      </div>
      <div class="hbar">
        <div class="stub"></div><div class="track"></div>
        <button aria-label="Влево">${icon("caretLeft", "i10")}</button>
        <button aria-label="Вправо">${icon("caretRight", "i10")}</button>
        <div class="end"></div>
      </div>
      <div class="sheet-tabs">
        <button class="round" aria-label="Добавить лист">${icon("plus", "i18")}</button>
        <button class="round" aria-label="Все листы">${icon("menu", "i18")}</button>
        <button class="sheet-tab">Статус анкет${icon("caret", "i10")}</button>
        <button class="side" aria-label="Боковая панель">${icon("chevronLeft", "i18")}</button>
      </div>

      <footer class="taskbar">
        ${this.app("windows", "Пуск")}
        ${this.app("find", "Поиск Windows")}
        ${this.app("folder", "Проводник")}
        ${this.app("edge", "Edge")}
        ${this.app("store", "Store")}
        ${this.app("chrome", "Chrome", "front")}
        ${this.app("yandex", "Яндекс")}
        ${this.app("cleaner", "CCleaner", "", "i28")}
        ${this.app("word", "Word", "open", "i28")}
        ${this.app("discord", "Discord", "open", "i30", "3")}
        ${this.app("eye", "Просмотр", "open", "i28")}
        <div class="tray">
          <button class="one" aria-label="Скрытые значки">${icon("chevronTray", "i16")}</button>
          <button class="one mic" aria-label="Микрофон">${icon("mic", "i20")}</button>
          <button class="lang">РУС<br />UKR</button>
          <button class="status" aria-label="Сеть, звук, батарея">${icon("wifi", "i20")}${icon("muted", "i20")}${icon("battery", "i20")}</button>
          <button class="clock">19:40<br />24.01.2026</button>
        </div>
      </footer>
    `;
  }
}
